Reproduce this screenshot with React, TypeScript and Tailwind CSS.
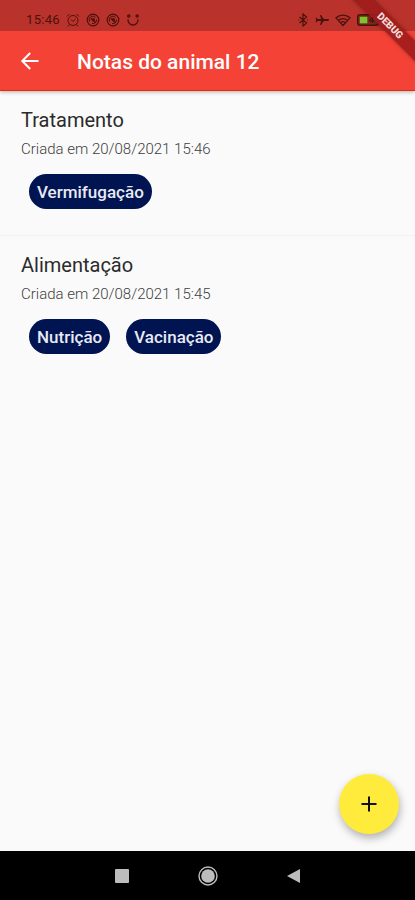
export default function App() {
  return (
    <div className="min-h-screen flex flex-col bg-[#fafafa] font-[Roboto,sans-serif]">
      <StatusBar />

      {/* App bar */}
      <header className="relative flex items-center h-[60px] px-[18px] bg-[#f44336] border-b border-[#e02a12] shadow-[0_1px_4px_rgba(0,0,0,0.3)]">
        <button type="button" aria-label="Voltar" className="w-6 h-6 text-white">
          <svg viewBox="0 0 24 24" className="w-6 h-6" fill="none" stroke="currentColor" strokeWidth="2">
            <path d="M20.5 12H5M12.2 4 4.3 12l7.9 8" />
          </svg>
        </button>
        <h1 className="ml-[35px] pt-0.5 text-[21px] leading-7 font-medium text-white">Notas do animal 12</h1>
      </header>

      {/* Notes */}
      <main className="flex-1">
        <ul>
          {notes.map((note) => (
            <li key={note.title} className="h-[145px] px-[21px] pt-[15px] border-b border-[#f2f2f2] last:border-b-0">
              <h2 className="text-[20px] leading-7 text-[#2b2b2b]">{note.title}</h2>
              <p className="mt-1 text-[15px] leading-[22px] font-light text-[#404040]">{note.created}</p>
              <div className="flex gap-4 mt-[14px] ml-2">
                {note.tags.map((tag) => (
                  <span
                    key={tag}
                    className="h-[35px] px-2 rounded-full bg-[#001452] text-[17px] leading-[36px] font-medium text-[#e8eaf2]"
                  >
                    {tag}
                  </span>
                ))}
              </div>
            </li>
          ))}
        </ul>
      </main>

      <button
        type="button"
        aria-label="Adicionar nota"
        className="fixed right-4 bottom-[66px] flex items-center justify-center w-[60px] h-[60px] rounded-full bg-[#ffeb3b] shadow-[1px_4px_8px_rgba(0,0,0,0.3)]"
      >
        <svg viewBox="0 0 16 16" className="w-4 h-4" stroke="#111" strokeWidth="2">
          <path d="M0.5 8h15M8 0.5v15" />
        </svg>
      </button>

      {/* System navigation */}
      <nav className="flex items-center justify-center gap-[69px] h-[49px] bg-black text-[#bdbdbd]">
        <button type="button" aria-label="Recentes">
          <svg viewBox="0 0 14 14" className="w-[14px] h-[14px]" fill="currentColor">
            <rect width="14" height="14" rx="1" />
          </svg>
        </button>
        <button type="button" aria-label="Início">
          <svg viewBox="0 0 20 20" className="w-5 h-5" fill="none" stroke="currentColor">
            <circle cx="10" cy="10" r="9" strokeWidth="1.4" />
            <circle cx="10" cy="10" r="6.8" fill="currentColor" stroke="none" />
          </svg>
        </button>
        <button type="button" aria-label="Voltar ao anterior">
          <svg viewBox="0 0 13 14" className="w-[13px] h-[14px]" fill="currentColor">
            <path d="M13 0v14L0 7z" />
          </svg>
        </button>
      </nav>
    </div>
  );
}

function StatusBar() {
  return (
    <div className="relative z-10 flex items-center justify-between h-[31px] pt-2 pl-[26px] pr-[34px] bg-[#b9322b] text-[#4a120d]">
      <div className="flex items-center gap-[6px]">
        <span className="text-[13px] leading-4 tracking-wide">15:46</span>
        <svg viewBox="0 0 14 14" className="w-[14px] h-[14px]" fill="none" stroke="currentColor">
          <circle cx="7" cy="7.5" r="5" />
          <path d="M1 3.5 3.5 1M13 3.5 10.5 1M3.4 11.5 2 13.3M10.6 11.5 12 13.3M5 6.5l2 2 2.5-2.3" />
        </svg>
        <StatusDisc />
        <StatusDisc />
        <svg viewBox="0 0 14 14" className="w-[14px] h-[14px]" fill="none" stroke="currentColor" strokeWidth="1.3">
          <path d="M2 6.2v.8a5 5 0 0 0 10 0v-.8" />
          <circle cx="2.8" cy="3" r="1.1" />
          <circle cx="11.2" cy="3" r="1.1" />
        </svg>
      </div>

      <div className="flex items-center gap-[6px]">
        <svg viewBox="0 0 12 14" className="w-3 h-[14px]" fill="none" stroke="currentColor" strokeWidth="1.2">
          <path d="m2.5 4 7 6L6 13V1l3.5 3-7 6M1 7h1M10 7h1" />
        </svg>
        <svg viewBox="0 0 14 14" className="w-[14px] h-[14px]" fill="currentColor">
          <path d="M14 7c0-.6-.5-.9-1.2-.9H8.800L6 2H4.800l1.400 4.100H2.500L1.500 4.800H.6L1.200 7 .6 9.200h.9l1-1.300h3.700L4.800 12H6l2.800-4.100h4C13.500 7.900 14 7.600 14 7z" />
        </svg>
        <svg viewBox="0 0 16 14" className="w-4 h-[14px]" fill="none" stroke="currentColor" strokeWidth="1.2">
          <path d="M1 4.800a10.500 10.500 0 0 1 14 0L8 12.500zM3.500 7.300a6.700 6.700 0 0 1 9 0M5.800 9.600a3.400 3.400 0 0 1 4.400 0" />
        </svg>
        <svg viewBox="0 0 24 12" className="w-6 h-3">
          <rect x="0.7" y="0.7" width="20.6" height="10.6" rx="2" fill="#7d2a1c" stroke="#4a120d" strokeWidth="1.4" />
          <rect x="2.8" y="2.8" width="7.5" height="6.5" fill="#79c52c" />
          <path d="M15.500 9V3l-3.500 4h5" fill="none" stroke="#4a120d" />
          <rect x="22" y="4" width="2" height="4" fill="#4a120d" />
        </svg>
      </div>

      {/* Debug ribbon across the corner */}
      <div className="absolute top-0 right-0 w-16 h-16 overflow-hidden">
        <div className="absolute top-[19px] -left-[11px] w-[100px] h-[14px] rotate-45 bg-[#a01c1c]/90 text-center text-[10px] leading-[14px] font-black text-[#f3dcdc] shadow-[0_0_4px_rgba(0,0,0,0.4)]">
          DEBUG
        </div>
      </div>
    </div>
  );
}

function StatusDisc() {
  return (
    <svg viewBox="0 0 14 14" className="w-[14px] h-[14px]" fill="none" stroke="currentColor">
      <circle cx="7" cy="7" r="5.8" strokeWidth="1.2" />
      <path d="M3.600 8.600A3.700 3.700 0 0 1 9.500 4.300M10.600 6.500A3.700 3.700 0 0 1 6 10.500" />
      <path d="m5 5.500 4.500 4" strokeWidth="1.6" />
      <circle cx="7.5" cy="6.5" r="1.5" fill="currentColor" stroke="none" />
    </svg>
  );
}

const notes = [
  {
    title: "Tratamento",
    created: "Criada em 20/08/2021 15:46",
    tags: ["Vermifugação"],
  },
  {
    title: "Alimentação",
    created: "Criada em 20/08/2021 15:45",
    tags: ["Nutrição", "Vacinação"],
  },
];
